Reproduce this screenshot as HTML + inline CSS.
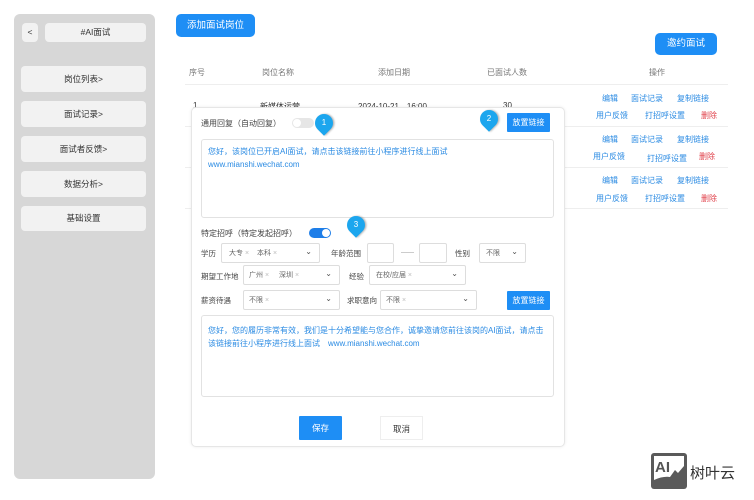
<!DOCTYPE html>
<html><head><meta charset="utf-8"><style>
*{box-sizing:border-box;margin:0;padding:0}
body{width:754px;height:500px;background:#fff;font-family:"Liberation Sans","Noto Sans CJK SC",sans-serif;font-size:8px;color:#333;position:relative;overflow:hidden}
.a{position:absolute}
.side{left:14px;top:14px;width:141px;height:465px;background:#d7d7d7;border-radius:6px}
.mb{position:absolute;background:#f2f2f2;border-radius:4px;text-align:center;font-size:8.5px;color:#333}
.btn{position:absolute;background:#1e8ef5;color:#fff;text-align:center;border-radius:4px;font-size:9.5px}
.th{position:absolute;top:67px;color:#777;font-size:8px}
.ln{position:absolute;left:185px;width:543px;height:1px;background:#eee}
.lk{position:absolute;color:#2b8be3;font-size:8px}
.rd{color:#e0404a}
.modal{left:191px;top:107px;width:374px;height:340px;background:#fff;border:1px solid #e6e6e6;border-radius:5px;box-shadow:0 0 3px rgba(0,0,0,.08)}
.ta{position:absolute;border:1px solid #e2e2e2;border-radius:3px;color:#2b8be3;font-size:8px;line-height:12.5px;padding:6px 6px}
.sel{position:absolute;border:1px solid #ddd;border-radius:2px;height:20px;font-size:7px;color:#666}
.sel .t{position:absolute;top:5px;padding:0 2px;line-height:10px}
.sel .t i{font-style:normal;color:#bbb}
.sel .v{position:absolute;right:7px;top:3px;font-size:8px;color:#555}
.lb{position:absolute;font-size:7.5px;color:#444}
.pin{position:absolute;width:18px;height:18px;background:#1ca6ee;border-radius:50% 50% 50% 0;transform:rotate(-45deg);box-shadow:1px 1px 2px rgba(0,0,0,.3)}
.pin span{display:block;transform:rotate(45deg);color:#fff;font-size:8px;text-align:center;line-height:18px}
</style></head><body>
<div class="a side"></div>
<div class="mb" style="left:22px;top:23px;width:16px;height:19px;line-height:19px">&lt;</div>
<div class="mb" style="left:45px;top:23px;width:101px;height:19px;line-height:19px">#AI面试</div>
<div class="mb" style="left:21px;top:66px;width:125px;height:26px;line-height:26px">岗位列表&gt;</div>
<div class="mb" style="left:21px;top:101px;width:125px;height:26px;line-height:26px">面试记录&gt;</div>
<div class="mb" style="left:21px;top:136px;width:125px;height:26px;line-height:26px">面试者反馈&gt;</div>
<div class="mb" style="left:21px;top:171px;width:125px;height:26px;line-height:26px">数据分析&gt;</div>
<div class="mb" style="left:21px;top:206px;width:125px;height:25px;line-height:25px">基础设置</div>

<div class="btn" style="left:176px;top:14px;width:79px;height:23px;line-height:23px;border-radius:5px">添加面试岗位</div>
<div class="btn" style="left:655px;top:33px;width:62px;height:22px;line-height:22px;border-radius:5px">邀约面试</div>
<div class="th" style="left:189px">序号</div>
<div class="th" style="left:262px">岗位名称</div>
<div class="th" style="left:378px">添加日期</div>
<div class="th" style="left:487px">已面试人数</div>
<div class="th" style="left:649px">操作</div>
<div class="ln" style="top:84px"></div>
<div class="ln" style="top:126px"></div>
<div class="ln" style="top:167px"></div>
<div class="ln" style="top:208px"></div>
<div class="a" style="left:193px;top:101px">1</div>
<div class="a" style="left:260px;top:101px">新媒体运营</div>
<div class="a" style="left:358px;top:101px">2024-10-21　16:00</div>
<div class="a" style="left:503px;top:101px">30</div>
<div class="lk" style="left:602px;top:93px">编辑</div><div class="lk" style="left:631px;top:93px">面试记录</div><div class="lk" style="left:677px;top:93px">复制链接</div>
<div class="lk" style="left:596px;top:110px">用户反馈</div><div class="lk" style="left:645px;top:110px">打招呼设置</div><div class="lk rd" style="left:701px;top:110px">删除</div>
<div class="lk" style="left:602px;top:134px">编辑</div><div class="lk" style="left:631px;top:134px">面试记录</div><div class="lk" style="left:677px;top:134px">复制链接</div>
<div class="lk" style="left:593px;top:151px">用户反馈</div><div class="lk" style="left:647px;top:153px">打招呼设置</div><div class="lk rd" style="left:699px;top:151px">删除</div>
<div class="lk" style="left:602px;top:175px">编辑</div><div class="lk" style="left:631px;top:175px">面试记录</div><div class="lk" style="left:677px;top:175px">复制链接</div>
<div class="lk" style="left:596px;top:193px">用户反馈</div><div class="lk" style="left:645px;top:193px">打招呼设置</div><div class="lk rd" style="left:701px;top:193px">删除</div>

<div class="a modal"></div>
<div class="lb" style="left:201px;top:118px;font-size:8px">通用回复（自动回复）</div>
<div class="a" style="left:292px;top:118px;width:22px;height:10px;border-radius:5px;background:#e6e6e6"><div class="a" style="left:1px;top:1px;width:8px;height:8px;border-radius:50%;background:#fff"></div></div>
<div class="pin" style="left:315px;top:114px"><span>1</span></div>
<div class="pin" style="left:480px;top:110px"><span>2</span></div>
<div class="btn" style="left:507px;top:113px;width:43px;height:19px;line-height:19px;border-radius:1px;font-size:8px">放置链接</div>
<div class="ta" style="left:201px;top:139px;width:353px;height:79px">您好，该岗位已开启AI面试，请点击该链接前往小程序进行线上面试<br>www.mianshi.wechat.com</div>
<div class="lb" style="left:201px;top:228px;font-size:8px">特定招呼（特定发起招呼）</div>
<div class="a" style="left:309px;top:228px;width:22px;height:10px;border-radius:5px;background:#1e7ee8"><div class="a" style="left:13px;top:1px;width:8px;height:8px;border-radius:50%;background:#fff"></div></div>
<div class="pin" style="left:347px;top:216px"><span>3</span></div>

<div class="lb" style="left:201px;top:248px">学历</div>
<div class="sel" style="left:221px;top:243px;width:99px"><span class="t" style="left:5px">大专 <i>×</i></span><span class="t" style="left:33px">本科 <i>×</i></span><span class="v">⌄</span></div>
<div class="lb" style="left:331px;top:248px">年龄范围</div>
<div class="sel" style="left:367px;top:243px;width:27px"></div>
<div class="a" style="left:401px;top:252px;width:13px;height:1px;background:#ccc"></div>
<div class="sel" style="left:419px;top:243px;width:28px"></div>
<div class="lb" style="left:455px;top:248px">性别</div>
<div class="sel" style="left:479px;top:243px;width:47px"><span class="t" style="left:4px">不限</span><span class="v">⌄</span></div>

<div class="lb" style="left:201px;top:271px">期望工作地</div>
<div class="sel" style="left:243px;top:265px;width:97px"><span class="t" style="left:3px">广州 <i>×</i></span><span class="t" style="left:33px">深圳 <i>×</i></span><span class="v">⌄</span></div>
<div class="lb" style="left:349px;top:271px">经验</div>
<div class="sel" style="left:369px;top:265px;width:97px"><span class="t" style="left:4px">在校/应届 <i>×</i></span><span class="v">⌄</span></div>

<div class="lb" style="left:201px;top:295px">薪资待遇</div>
<div class="sel" style="left:243px;top:290px;width:97px"><span class="t" style="left:3px">不限 <i>×</i></span><span class="v">⌄</span></div>
<div class="lb" style="left:347px;top:295px">求职意向</div>
<div class="sel" style="left:380px;top:290px;width:97px"><span class="t" style="left:3px">不限 <i>×</i></span><span class="v">⌄</span></div>
<div class="btn" style="left:507px;top:291px;width:43px;height:19px;line-height:19px;border-radius:1px;font-size:8px">放置链接</div>
<div class="ta" style="left:201px;top:315px;width:353px;height:82px;padding-top:9px">您好，您的履历非常有效，我们是十分希望能与您合作，诚挚邀请您前往该岗的AI面试，请点击该链接前往小程序进行线上面试　www.mianshi.wechat.com</div>
<div class="btn" style="left:299px;top:416px;width:43px;height:24px;line-height:24px;border-radius:1px;font-size:8.5px">保存</div>
<div class="a" style="left:380px;top:416px;width:43px;height:24px;line-height:24px;border:1px solid #eee;text-align:center;font-size:8.5px">取消</div>

<div class="a" style="left:651px;top:453px;width:36px;height:36px;background:#5a5a5a;border-radius:3px">
<svg width="36" height="36" viewBox="0 0 36 36"><rect x="3" y="3" width="30" height="27" fill="#fff"/><text x="4" y="19" font-family="Liberation Sans" font-weight="bold" font-size="15" fill="#555">AI</text><path d="M19 24 L24 17 L27 20 L33 13 V30 H3 V27 Q12 23 19 24Z" fill="#5a5a5a"/></svg></div>
<div class="a" style="left:690px;top:462px;font-size:15px;color:#333">树叶云</div>
</body></html>
